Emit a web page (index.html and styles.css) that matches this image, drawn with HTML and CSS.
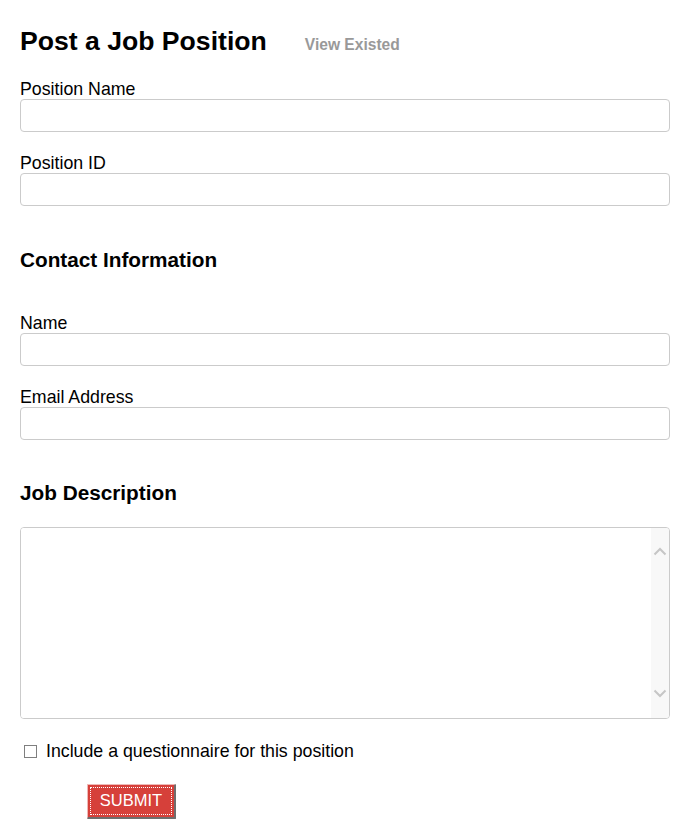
FILE: index.html
```html
<!DOCTYPE html>
<html>
<head>
<meta charset="utf-8">
<title>Post a Job Position</title>
<link rel="stylesheet" href="styles.css">
</head>
<body>
<form class="page">
  <div class="header">
    <h1 class="title">Post a Job Position</h1>
    <a class="view-link" href="#">View Existed</a>
  </div>

  <div class="field">
    <label class="label" for="pname">Position Name</label>
    <input class="input" id="pname" type="text">
  </div>
  <div class="field">
    <label class="label" for="pid">Position ID</label>
    <input class="input" id="pid" type="text">
  </div>

  <h3 class="section">Contact Information</h3>

  <div class="field">
    <label class="label" for="cname">Name</label>
    <input class="input" id="cname" type="text">
  </div>
  <div class="field">
    <label class="label" for="cemail">Email Address</label>
    <input class="input" id="cemail" type="text">
  </div>

  <h3 class="section section-job">Job Description</h3>

  <div class="textarea-box">
    <textarea class="textarea"></textarea>
    <div class="scrollbar">
      <svg class="chev" width="14" height="10" viewBox="0 0 14 10"><path d="M1.5 8.5 L7 3 L12.5 8.5" fill="none" stroke="#c6c6c6" stroke-width="2"/></svg>
      <svg class="chev" width="14" height="10" viewBox="0 0 14 10"><path d="M1.5 1.5 L7 7 L12.5 1.5" fill="none" stroke="#c6c6c6" stroke-width="2"/></svg>
    </div>
  </div>

  <label class="check-row">
    <input class="check" type="checkbox">
    <span>Include a questionnaire for this position</span>
  </label>

  <div class="actions">
    <button class="submit" type="button"><span class="submit-inner">SUBMIT</span></button>
  </div>
</form>
</body>
</html>
```

FILE: styles.css
```css
html, body {
  margin: 0;
  padding: 0;
  background: #ffffff;
}

body {
  font-family: "Liberation Sans", Arial, sans-serif;
  font-size: 17.75px;
  color: #000;
  overflow: hidden;
}

.page {
  padding: 26px 14px 0 20px;
}

.header {
  display: flex;
  align-items: baseline;
  gap: 38px;
}

.title {
  margin: 0;
  font-size: 26.6px;
  line-height: 30px;
  font-weight: bold;
}

.view-link {
  font-size: 15.6px;
  font-weight: bold;
  color: #999;
  text-decoration: none;
}

.field {
  margin-top: 23px;
}

.field + .field {
  margin-top: 21px;
}

.label {
  display: block;
  line-height: 20px;
}

.input {
  display: block;
  box-sizing: border-box;
  width: 100%;
  height: 33px;
  margin: 0;
  border: 1px solid #cbcbcb;
  border-radius: 4px;
  background: #fff;
  font: inherit;
  padding: 0 6px;
}

.section {
  margin: 42px 0 0;
  font-size: 20.75px;
  line-height: 24px;
  font-weight: bold;
}

.section + .field {
  margin-top: 41px;
}

.section-job {
  margin-top: 41px;
}

.textarea-box {
  display: flex;
  box-sizing: border-box;
  height: 192px;
  margin-top: 22px;
  border: 1px solid #cbcbcb;
  border-radius: 4px;
  overflow: hidden;
  background: #fff;
}

.textarea {
  flex: 1;
  border: 0;
  margin: 0;
  padding: 4px 6px;
  resize: none;
  font: inherit;
  outline: none;
}

.scrollbar {
  width: 18px;
  background: #f8f8f8;
  display: flex;
  flex-direction: column;
  justify-content: space-between;
  align-items: center;
  padding: 18px 0 19px;
}

.chev {
  display: block;
}

.check-row {
  display: flex;
  align-items: center;
  margin-top: 22px;
  line-height: 20px;
}

.check {
  appearance: none;
  -webkit-appearance: none;
  width: 13px;
  height: 13px;
  margin: 1px 9px 0 4px;
  border: 1px solid #7f7f7f;
  background: #fff;
  border-radius: 0;
}

.actions {
  margin-top: 23px;
  padding-left: 67px;
}

.submit {
  box-sizing: border-box;
  width: 89px;
  height: 35px;
  padding: 2px;
  background: #d6403a;
  border-style: solid;
  border-width: 1px 2px 2px 1px;
  border-color: #efb8b6 #6e6e6e #6e6e6e #efb8b6;
  border-radius: 1px;
  color: #fff;
  font-family: "Liberation Sans", Arial, sans-serif;
  font-size: 16.5px;
  cursor: pointer;
}

.submit-inner {
  display: flex;
  align-items: center;
  justify-content: center;
  height: 100%;
  padding-bottom: 2px;
  border: 1px dotted #fff;
  box-sizing: border-box;
}
```
